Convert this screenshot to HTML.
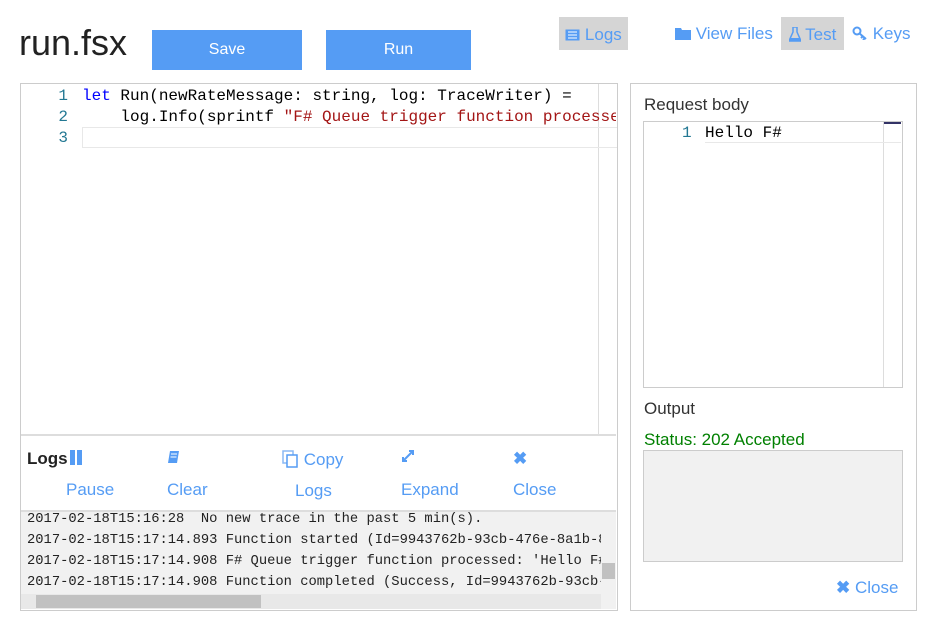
<!DOCTYPE html><html><head><style>
body{margin:0;width:933px;height:626px;background:#fff;font-family:"Liberation Sans",sans-serif;position:relative;overflow:hidden}
.a{position:absolute}
.btn{background:#559cf4;color:#fff;font-size:16px;text-align:center;line-height:40px}
.lnk{color:#559cf4;font-size:17px}
.mono{font-family:"Liberation Mono",monospace}
</style></head><body>
<div class="a" style="left:19px;top:22px;font-size:36px;color:#222">run.fsx</div>
<div class="a btn" style="left:152px;top:30px;width:150px;height:40px">Save</div>
<div class="a btn" style="left:326px;top:30px;width:145px;height:40px">Run</div>
<div class="a lnk" style="left:559px;top:17px;width:69px;height:33px;background:#d5d5d5;line-height:35px;text-align:center">
<svg width="15" height="12" style="vertical-align:-1px"><rect x="0.5" y="0.5" width="14" height="11" fill="#559cf4"/><path d="M3 3h9M3 6h9M3 9h9" stroke="#fff" stroke-width="1"/></svg> Logs</div>
<div class="a lnk" style="left:675px;top:24px"><svg width="16" height="13" style="vertical-align:-1px"><path d="M0 1h6l1 2h9v10H0z" fill="#559cf4"/></svg> View Files</div>
<div class="a lnk" style="left:781px;top:17px;width:63px;height:33px;background:#d5d5d5;line-height:35px;text-align:center"><svg width="12" height="15" style="vertical-align:-2px"><path d="M4 0h4v5l4 9H0l4-9z" fill="none" stroke="#559cf4" stroke-width="1.5"/><path d="M1.5 11h9l1 3H0z" fill="#559cf4"/></svg> Test</div>
<div class="a lnk" style="left:852px;top:24px"><svg width="16" height="14" style="vertical-align:-1px"><circle cx="5" cy="5" r="3.5" fill="none" stroke="#559cf4" stroke-width="2"/><path d="M7 7l7 6M11 10l-2 2M13 12l-2 2" stroke="#559cf4" stroke-width="2"/></svg> Keys</div>

<div class="a" style="left:20px;top:83px;width:596px;height:526px;border:1px solid #ccc"></div>
<div class="a" style="left:598px;top:84px;width:1px;height:350px;background:#ddd"></div>
<div class="a" style="left:82px;top:127px;width:534px;height:19px;border:1px solid #e8e8e8;border-right:0"></div>
<div class="a mono" style="left:30px;top:86px;font-size:16px;line-height:21px;white-space:pre;color:#237893"><div style="width:38px;text-align:right">1
2
3</div></div>
<div class="a mono" style="left:82px;top:86px;width:534px;overflow:hidden;font-size:16px;line-height:21px;white-space:pre;color:#000"><span style="color:#00f">let</span> Run(newRateMessage: string, log: TraceWriter) =
    log.Info(sprintf <span style="color:#a31515">"F# Queue trigger function processed</span></div>
<div class="a" style="left:21px;top:434px;width:595px;height:2px;background:#ddd"></div>
<div class="a" style="left:27px;top:449px;font-size:17px;font-weight:bold;color:#222">Logs<span style="display:inline-block;width:5px;height:15px;background:#559cf4;margin-left:2px;vertical-align:-1px"></span><span style="display:inline-block;width:5px;height:15px;background:#559cf4;margin-left:2px;vertical-align:-1px"></span></div>
<div class="a lnk" style="left:66px;top:480px">Pause</div>
<div class="a" style="left:167px;top:450px"><svg width="12" height="15"><path d="M3 1h9l-2 12H1z" fill="#559cf4"/><path d="M4 4h6M3.5 7h6" stroke="#fff" stroke-width="1"/></svg></div>
<div class="a lnk" style="left:167px;top:480px">Clear</div>
<div class="a lnk" style="left:282px;top:450px"><svg width="17" height="18" style="vertical-align:-3px"><rect x="1" y="1" width="10" height="12" fill="none" stroke="#8ab8f4" stroke-width="1.5"/><rect x="5" y="5" width="10" height="12" fill="#fff" stroke="#559cf4" stroke-width="1.5"/></svg> Copy</div>
<div class="a lnk" style="left:295px;top:481px">Logs</div>
<div class="a" style="left:401px;top:449px"><svg width="14" height="14"><path d="M2 12L12 2M8 2h4v4M2 8v4h4" stroke="#559cf4" stroke-width="2" fill="none"/></svg></div>
<div class="a lnk" style="left:401px;top:480px">Expand</div>
<div class="a" style="left:513px;top:449px;color:#559cf4;font-size:17px;font-weight:bold">✖</div>
<div class="a lnk" style="left:513px;top:480px">Close</div>
<div class="a" style="left:21px;top:510px;width:595px;height:2px;background:#ddd"></div>
<div class="a" style="left:21px;top:512px;width:595px;height:97px;background:#f1f1f1"></div>
<div class="a mono" style="left:27px;top:509px;width:574px;overflow:hidden;height:85px;font-size:13.8px;line-height:21px;white-space:pre;color:#222">2017-02-18T15:16:28  No new trace in the past 5 min(s).
2017-02-18T15:17:14.893 Function started (Id=9943762b-93cb-476e-8a1b-8
2017-02-18T15:17:14.908 F# Queue trigger function processed: 'Hello F#
2017-02-18T15:17:14.908 Function completed (Success, Id=9943762b-93cb-</div>
<div class="a" style="left:601px;top:512px;width:15px;height:82px;background:#f1f1f1"></div>
<div class="a" style="left:602px;top:563px;width:13px;height:16px;background:#c1c1c1"></div>
<div class="a" style="left:21px;top:594px;width:580px;height:15px;background:#e8e8e8"></div>
<div class="a" style="left:36px;top:595px;width:225px;height:13px;background:#c1c1c1"></div>

<div class="a" style="left:630px;top:83px;width:285px;height:526px;border:1px solid #ccc"></div>
<div class="a" style="left:644px;top:95px;font-size:17px;color:#333">Request body</div>
<div class="a" style="left:643px;top:121px;width:258px;height:265px;border:1px solid #ccc"></div>
<div class="a" style="left:883px;top:122px;width:1px;height:265px;background:#ddd"></div>
<div class="a" style="left:884px;top:122px;width:17px;height:2px;background:#336"></div>
<div class="a" style="left:705px;top:124px;width:196px;height:18px;border-bottom:1px solid #e8e8e8"></div>
<div class="a mono" style="left:682px;top:124px;font-size:16px;color:#237893">1</div>
<div class="a mono" style="left:705px;top:124px;font-size:16px;color:#000">Hello F#</div>
<div class="a" style="left:644px;top:399px;font-size:17px;color:#333">Output</div>
<div class="a" style="left:644px;top:430px;font-size:17px;color:#008000">Status: 202 Accepted</div>
<div class="a" style="left:643px;top:450px;width:258px;height:110px;border:1px solid #ccc;background:#f1f1f1"></div>
<div class="a lnk" style="left:836px;top:578px"><b>✖</b> Close</div>
</body></html>
